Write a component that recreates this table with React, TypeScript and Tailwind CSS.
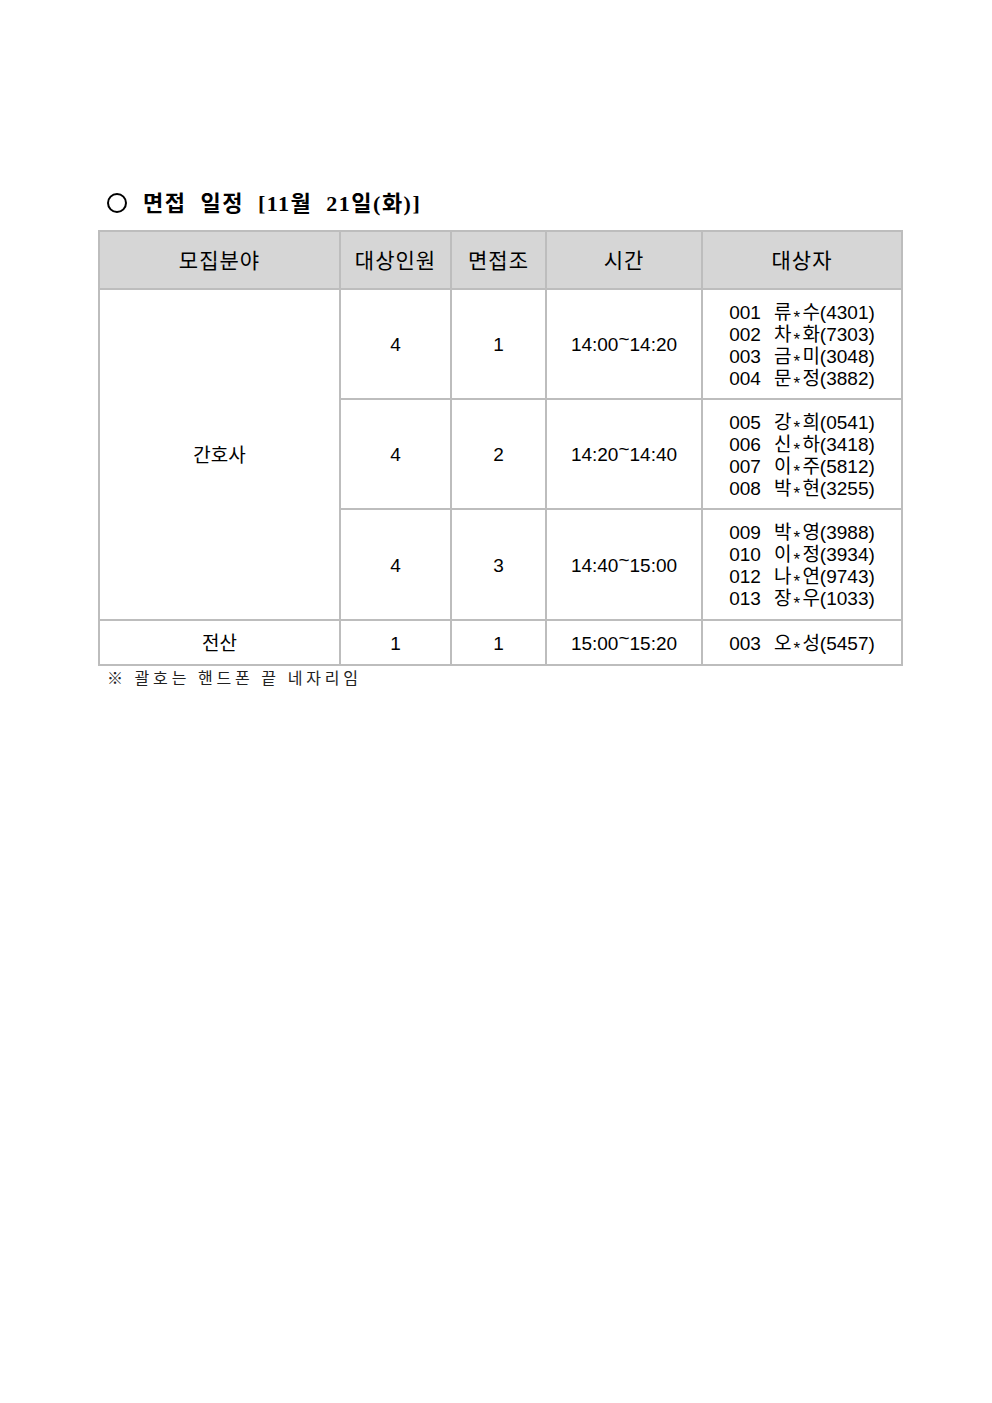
import React from "react";

const sans = { fontFamily: '"Liberation Sans", "Noto Sans CJK KR", sans-serif' };

function Names({ rows }: { rows: [string, string, string, string][] }) {
  return (
    <div className="flex h-full items-center justify-center bg-white pt-[3px]">
      <div className="flex flex-col text-[19px] text-black">
        {rows.map((r, i) => (
          <div key={i} className="flex h-[22px] items-center whitespace-pre leading-[22px]">
            <span>{r[0]}</span>
            <span className="inline-block w-[13px]" />
            <span>{r[1]}</span>
            <span className="relative top-[5px] inline-block w-[11px] text-center text-[17px] leading-[22px]">*</span>
            <span>{r[2]}</span>
            <span>({r[3]})</span>
          </div>
        ))}
      </div>
    </div>
  );
}

function Time({ a, b }: { a: string; b: string }) {
  return (
    <span className="whitespace-pre">
      {a}
      <span className="relative top-[-6px]">~</span>
      {b}
    </span>
  );
}

function Cell({ children, head }: { children: React.ReactNode; head?: boolean }) {
  return (
    <div
      className={
        "flex h-full items-center justify-center text-black " +
        (head ? "bg-[#d6d6d6] pt-[2px] text-[21px] tracking-[1px]" : "bg-white pt-[3px] text-[19px]")
      }
    >
      {children}
    </div>
  );
}

export default function App() {
  return (
    <div className="min-h-[1403px] w-[992px] bg-white pl-[98px] pt-[189px]" style={sans}>
      <div
        className="flex h-[28px] items-center pl-[9px] text-[22px] font-bold tracking-[1.5px] text-black"
        style={{ fontFamily: '"Liberation Serif", "Noto Sans CJK KR", serif' }}
      >
        <span className="mr-[16px] inline-block h-[20px] w-[20px] rounded-full border-[2px] border-black" />
        <span className="whitespace-pre">면접  일정  [11월  21일(화)]</span>
      </div>
      <div className="mt-[13px] grid w-[805px] grid-cols-[239px_109px_93px_154px_198px] grid-rows-[56px_108px_108px_109px_43px] gap-[2px] bg-[#bdbdbd] p-[2px]">
        <Cell head>모집분야</Cell>
        <Cell head>대상인원</Cell>
        <Cell head>면접조</Cell>
        <Cell head>시간</Cell>
        <Cell head>대상자</Cell>

        <div className="row-span-3">
          <Cell>간호사</Cell>
        </div>
        <Cell>4</Cell>
        <Cell>1</Cell>
        <Cell>
          <Time a="14:00" b="14:20" />
        </Cell>
        <Names
          rows={[
            ["001", "류", "수", "4301"],
            ["002", "차", "화", "7303"],
            ["003", "금", "미", "3048"],
            ["004", "문", "정", "3882"],
          ]}
        />

        <Cell>4</Cell>
        <Cell>2</Cell>
        <Cell>
          <Time a="14:20" b="14:40" />
        </Cell>
        <Names
          rows={[
            ["005", "강", "희", "0541"],
            ["006", "신", "하", "3418"],
            ["007", "이", "주", "5812"],
            ["008", "박", "현", "3255"],
          ]}
        />

        <Cell>4</Cell>
        <Cell>3</Cell>
        <Cell>
          <Time a="14:40" b="15:00" />
        </Cell>
        <Names
          rows={[
            ["009", "박", "영", "3988"],
            ["010", "이", "정", "3934"],
            ["012", "나", "연", "9743"],
            ["013", "장", "우", "1033"],
          ]}
        />

        <Cell>전산</Cell>
        <Cell>1</Cell>
        <Cell>1</Cell>
        <Cell>
          <Time a="15:00" b="15:20" />
        </Cell>
        <Names rows={[["003", "오", "성", "5457"]]} />
      </div>
      <div
        className="whitespace-pre pl-[9px] text-[16px] leading-[26px] tracking-[3.8px] text-[#222]"
        style={{ fontFamily: '"Liberation Serif", "Noto Sans CJK KR", serif' }}
      >
        ※ 괄호는 핸드폰 끝 네자리임
      </div>
    </div>
  );
}
